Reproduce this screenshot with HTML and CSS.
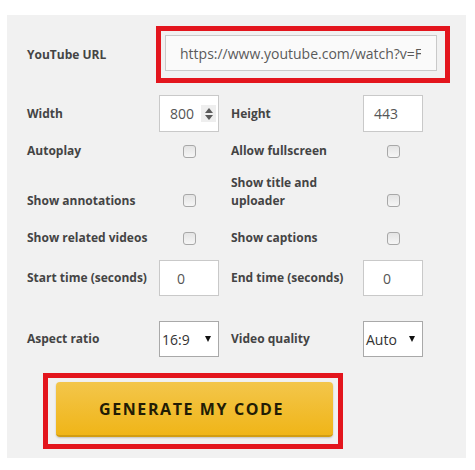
FILE: index.html
```html
<!DOCTYPE html>
<html>
<head>
<meta charset="utf-8">
<link rel="stylesheet" href="styles.css">
</head>
<body>
<div class="panel">
  <div class="row row-url">
    <div class="lbl">YouTube URL</div>
    <div class="hl url-hl"><div class="field url"><span class="url-text">https://www.youtube.com/watch?v=FzcfZyEhOoI</span></div></div>
  </div>

  <div class="row row-width">
    <div class="lbl">Width</div>
    <div class="field num">
      <span>800</span>
      <span class="spin"><span class="up"></span><span class="down"></span></span>
    </div>
    <div class="lbl">Height</div>
    <div class="field num"><span>443</span></div>
  </div>

  <div class="row row-auto">
    <div class="lbl">Autoplay</div>
    <div class="cell"><span class="cb"></span></div>
    <div class="lbl">Allow fullscreen</div>
    <div class="cell"><span class="cb"></span></div>
  </div>

  <div class="row row-two">
    <div class="lbl">Show annotations</div>
    <div class="cell"><span class="cb"></span></div>
    <div class="lbl">Show title and uploader</div>
    <div class="cell"><span class="cb"></span></div>
  </div>

  <div class="row row-related">
    <div class="lbl">Show related videos</div>
    <div class="cell"><span class="cb"></span></div>
    <div class="lbl">Show captions</div>
    <div class="cell"><span class="cb"></span></div>
  </div>

  <div class="row row-time">
    <div class="lbl">Start time (seconds)</div>
    <div class="field time start">0</div>
    <div class="lbl">End time (seconds)</div>
    <div class="field time end">0</div>
  </div>

  <div class="row row-select">
    <div class="lbl">Aspect ratio</div>
    <div class="field sel"><span>16:9</span><span class="arrow"></span></div>
    <div class="lbl">Video quality</div>
    <div class="field sel"><span>Auto</span><span class="arrow"></span></div>
  </div>

  <div class="hl btn-hl">
    <button class="btn">GENERATE MY CODE</button>
  </div>
</div>
</body>
</html>
```

FILE: styles.css
```css
body {
  margin: 0;
  background: #ffffff;
  font-family: "Open Sans", "Liberation Sans", sans-serif;
}

.panel {
  margin: 15px 0 0 7px;
  width: 459px;
  height: 443px;
  box-sizing: border-box;
  padding: 11px 0 9px 20px;
  background: #f1f1f1;
}

.row {
  display: grid;
  grid-template-columns: 132px 72px 132px 60px;
  align-items: center;
}

.lbl {
  font-size: 12px;
  font-weight: 700;
  color: #444444;
  line-height: 18px;
}

.row-url {
  grid-template-columns: 129px 294px;
}

.hl {
  border: 5px solid #e3151d;
}

.url-hl {
  padding: 4px 8px 7px 4px;
}

.field {
  box-sizing: border-box;
  width: 60px;
  height: 37px;
  border: 1px solid #c9c9c9;
  background: #ffffff;
  font-size: 14px;
  color: #555555;
  display: flex;
  align-items: center;
}

.url {
  width: 272px;
  height: 36px;
  background: #fafafa;
  padding: 0 15px 0 14px;
  color: #5a5a5a;
}

.url-text {
  display: block;
  white-space: nowrap;
  overflow: hidden;
  flex: 1;
}

.row-width { margin-top: 12px; }
.row-auto { margin-top: 10px; }
.row-two { margin-top: 14px; align-items: end; }
.row-two .cb { margin-bottom: 3px; }
.row-related { margin-top: 19px; }
.row-time { margin-top: 13px; }
.row-select { margin-top: 25px; }

.num {
  padding-left: 10px;
}

.spin {
  margin-left: auto;
  margin-right: 2px;
  width: 15px;
  height: 17px;
  background: #eeeeee;
  display: flex;
  flex-direction: column;
  align-items: center;
  justify-content: center;
  gap: 2px;
}

.up {
  width: 0;
  height: 0;
  border-left: 4px solid transparent;
  border-right: 4px solid transparent;
  border-bottom: 5px solid #5a5a5a;
}

.down {
  width: 0;
  height: 0;
  border-left: 4px solid transparent;
  border-right: 4px solid transparent;
  border-top: 5px solid #5a5a5a;
}

.time {
  height: 36px;
}

.start { padding-left: 17px; }
.end { padding-left: 19px; }

.sel {
  height: 36px;
  border-color: #a9a9a9;
  padding-left: 2px;
  padding-right: 7px;
  justify-content: space-between;
  color: #333333;
}

.arrow {
  width: 0;
  height: 0;
  border-left: 3px solid transparent;
  border-right: 3px solid transparent;
  border-top: 6px solid #111111;
}

.cell {
  width: 60px;
  display: flex;
  justify-content: center;
}

.cb {
  display: block;
  width: 13px;
  height: 13px;
  box-sizing: border-box;
  border: 1px solid #a8a8a8;
  border-radius: 3px;
  background: linear-gradient(#e4e4e4, #f6f6f6);
}

.btn-hl {
  margin: 16px 0 0 16px;
  width: 300px;
  box-sizing: border-box;
  padding: 4px 5px 7px 8px;
}

.btn {
  display: block;
  width: 277px;
  height: 55px;
  border: none;
  border-bottom: 2px solid #d29d12;
  border-radius: 4px;
  background: linear-gradient(#f3c64b, #f0b518);
  box-shadow: 0 1px 2px rgba(0, 0, 0, 0.2);
  font-family: "Open Sans", "Liberation Sans", sans-serif;
  font-size: 16px;
  font-weight: 700;
  letter-spacing: 1.6px;
  color: #221c05;
  padding: 0 6px 0 0;
}
```
